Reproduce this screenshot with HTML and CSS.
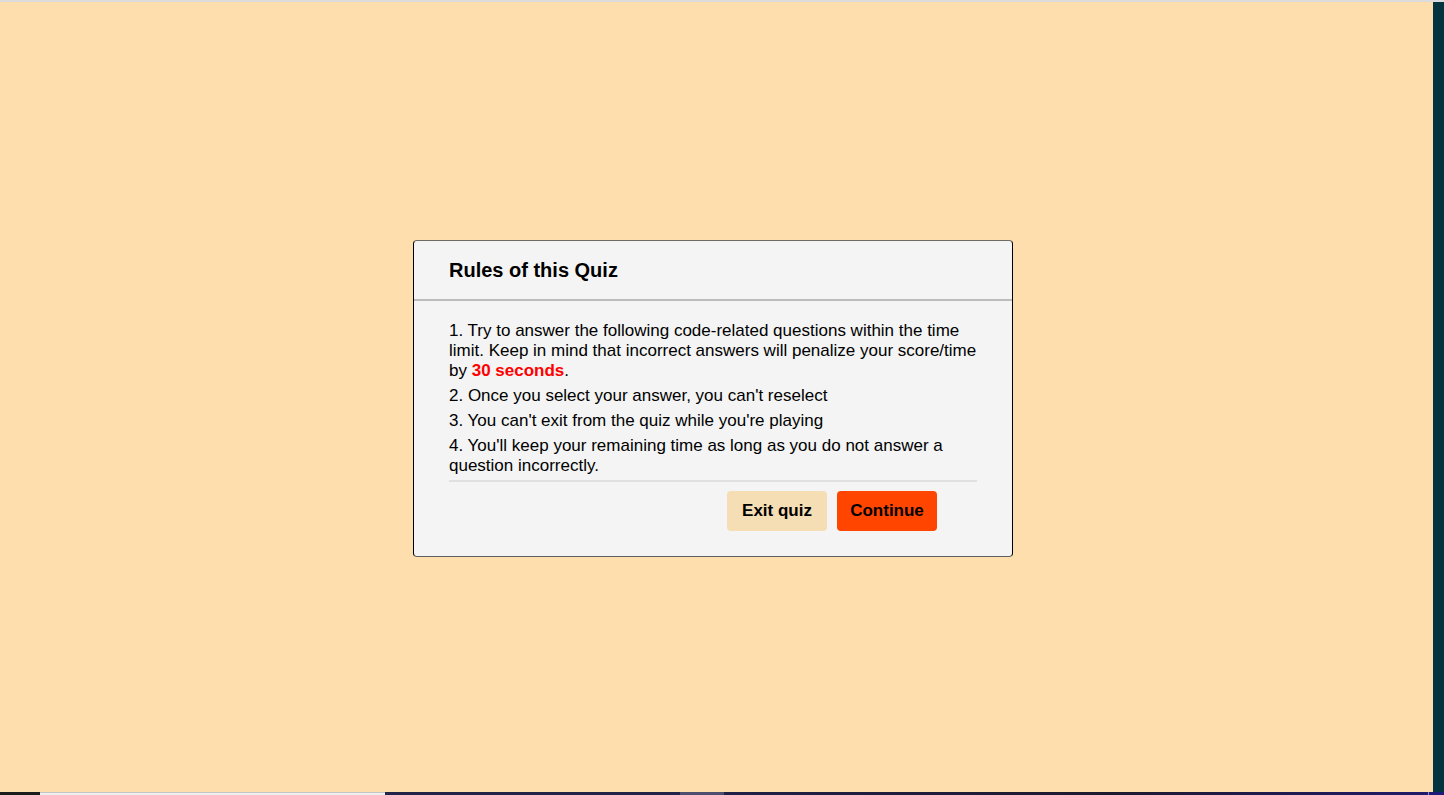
FILE: index.html
```html
<!DOCTYPE html>
<html lang="en">
<head>
<meta charset="utf-8">
<title>Quiz Rules</title>
<link rel="stylesheet" href="styles.css">
</head>
<body>
<div class="screen">
  <div class="top-strip"></div>
  <div class="middle">
    <main class="page">
      <section class="dialog">
        <header class="dialog-header">
          <h1 class="dialog-title">Rules of this Quiz</h1>
        </header>
        <div class="dialog-body">
          <div class="rules">
            <p class="rule">1. Try to answer the following code-related questions within the time limit. Keep in mind that incorrect answers will penalize your score/time by <span class="penalty">30 seconds</span>.</p>
            <p class="rule">2. Once you select your answer, you can't reselect</p>
            <p class="rule">3. You can't exit from the quiz while you're playing</p>
            <p class="rule">4. You'll keep your remaining time as long as you do not answer a question incorrectly.</p>
          </div>
          <div class="actions">
            <button class="btn btn-exit" type="button">Exit quiz</button>
            <button class="btn btn-continue" type="button">Continue</button>
          </div>
        </div>
      </section>
    </main>
    <div class="side-strip"></div>
  </div>
  <div class="taskbar">
    <div class="tb-seg tb-dark"></div>
    <div class="tb-seg tb-light"></div>
    <div class="tb-seg tb-navy1"></div>
    <div class="tb-seg tb-active"></div>
    <div class="tb-seg tb-navy2"></div>
    <div class="tb-seg tb-tick"></div>
    <div class="tb-seg tb-end"></div>
  </div>
</div>
</body>
</html>
```

FILE: styles.css
```css
* { box-sizing: border-box; }

html, body {
  margin: 0;
  padding: 0;
  height: 100%;
  overflow: hidden;
}

body {
  font-family: "Liberation Sans", Arial, sans-serif;
  color: #000;
}

.screen {
  display: flex;
  flex-direction: column;
  width: 1444px;
  height: 795px;
}

.top-strip {
  height: 2px;
  background: #dcdcdc;
  flex: none;
}

.middle {
  flex: 1;
  display: flex;
  min-height: 0;
}

.page {
  flex: 1;
  background: #ffdead;
  display: flex;
  align-items: center;
  justify-content: center;
  padding-right: 7px;
  padding-top: 3px;
}

.side-strip {
  width: 11px;
  background: #04343f;
  flex: none;
}

.dialog {
  width: 600px;
  background: #f4f4f4;
  border: 1px solid #000;
  border-top-color: #6e6a64;
  border-bottom-color: #5e5e5e;
  border-radius: 4px;
  flex: none;
}

.dialog-header {
  height: 60px;
  display: flex;
  align-items: center;
  padding: 0 35px;
  border-bottom: 2px solid #bcbcbc;
}

.dialog-title {
  margin: 0;
  font-size: 20px;
  font-weight: bold;
  line-height: 23px;
}

.dialog-body {
  padding: 20px 35px 25px;
}

.rules {
  border-bottom: 2px solid #e0e0e0;
  padding-bottom: 4px;
}

.rule {
  margin: 0 0 5px;
  font-size: 17px;
  line-height: 20px;
}

.rule:last-child {
  margin-bottom: 0;
}

.penalty {
  color: #ff0000;
  font-weight: bold;
}

.actions {
  display: flex;
  justify-content: flex-end;
  gap: 10px;
  padding: 9px 40px 0 0;
}

.btn {
  width: 100px;
  height: 40px;
  border: none;
  border-radius: 4px;
  font-family: "Liberation Sans", Arial, sans-serif;
  font-size: 17px;
  font-weight: bold;
  color: #000;
  padding: 0;
}

.btn-exit {
  background: #f5deb3;
}

.btn-continue {
  background: #ff4500;
}

.taskbar {
  height: 3px;
  flex: none;
  display: flex;
}

.tb-seg { height: 100%; }
.tb-dark { width: 40px; background: #1c1c1c; }
.tb-light { width: 345px; background: #f0f0f0; border-top: 1px solid #c4c4c4; }
.tb-navy1 { width: 295px; background: #23234a; }
.tb-active { width: 44px; background: #4e4e6e; }
.tb-navy2 { flex: 1; background: linear-gradient(90deg, #202048, #1e1a2e 55%, #201a6a); }
.tb-tick { width: 1px; background: #8a8ac0; }
.tb-end { width: 15px; background: #1e1a78; }
```
